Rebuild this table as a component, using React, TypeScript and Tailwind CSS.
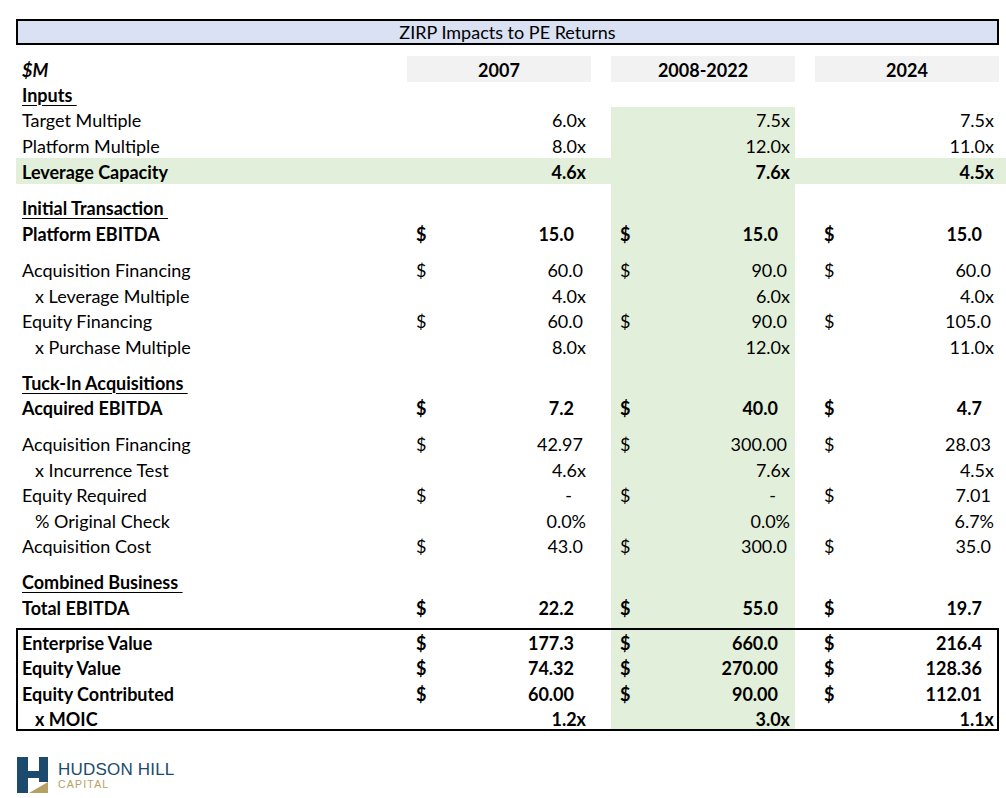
import React from "react";

type Kind = "n" | "x" | "dash";
type Cell = { v: string; d?: boolean; k?: Kind };

const GREEN = "bg-[#e2efda]";
const COLS = "grid grid-cols-[391px_184px_20px_184px_20px_184px]";

// right padding matches excel accounting formats
const pad = (k: Kind, bold: boolean) => {
  if (k === "x") return "pr-[5px]";
  if (k === "dash") return "pr-[19px]";
  return bold ? "pr-[17px]" : "pr-[8px]";
};

const Value = ({ c, bold, green }: { c?: Cell; bold: boolean; green?: boolean }) => (
  <div className={`flex items-end justify-between pb-[2.5px] ${green ? GREEN : ""}`}>
    {c && (
      <>
        <span className="pl-[9px]">{c.d ? "$" : ""}</span>
        <span className={pad(c.k ?? "n", bold)}>{c.v}</span>
      </>
    )}
  </div>
);

type RowProps = {
  label?: React.ReactNode;
  cells?: Cell[];
  bold?: boolean;
  indent?: boolean;
  h: string;
  plainB?: boolean;
  band?: boolean;
};

const Row = ({ label, cells, bold = false, indent, h, plainB, band }: RowProps) => (
  <div className={`${COLS} ${h} ${bold ? "font-bold" : ""} ${band ? GREEN : ""}`}>
    <div className={`flex items-end pb-[2.5px] ${indent ? "pl-[19px]" : "pl-[6px]"}`}>{label}</div>
    <Value c={cells?.[0]} bold={bold} />
    <div />
    <Value c={cells?.[1]} bold={bold} green={!plainB && !band} />
    <div />
    <Value c={cells?.[2]} bold={bold} />
  </div>
);

const Section = ({ children }: { children: string }) => (
  <span className="underline decoration-1 underline-offset-[3px]">{children + "\u00a0"}</span>
);

const n = (v: string, d = true): Cell => ({ v, d, k: "n" });
const x = (v: string): Cell => ({ v, k: "x" });
const dash: Cell = { v: "-", d: true, k: "dash" };

const Logo = () => (
  <div className="flex items-start gap-[10px] pl-[1px] mt-[26px]">
    <svg width="31" height="36" viewBox="0 0 31 36">
      <rect x="0" y="0" width="11" height="36" fill="#1c4a6c" />
      <rect x="22" y="0" width="9" height="25" fill="#1c4a6c" />
      <rect x="11" y="14" width="11" height="7" fill="#1c4a6c" />
      <polygon points="12,36 31,25 31,36" fill="#b8a064" />
    </svg>
    <div className="mt-[3.5px] font-['Liberation_Sans',_sans-serif]">
      <div className="text-[17px] leading-[17px] text-[#1c4a6c] tracking-[0.2px]">HUDSON HILL</div>
      <div className="text-[10.5px] leading-[12px] text-[#b8a064] tracking-[1.2px]">CAPITAL</div>
    </div>
  </div>
);

export default function App() {
  return (
    <div className="w-[1006px] h-[798px] bg-white pt-[19px] pl-[16px] text-black text-[18px] leading-[20px] font-['Lato',_sans-serif]">
      {/* title */}
      <div className="w-[983px] h-[26px] border-2 border-black bg-[#d9e1f2] flex items-center justify-center">
        ZIRP Impacts to PE Returns
      </div>

      {/* column headers */}
      <div className={`${COLS} h-[26px] mt-[11px] font-bold`}>
        <div className="flex items-end pb-[2.5px] pl-[6px] italic">$M</div>
        <div className="flex items-end justify-center pb-[2.5px] bg-[#f2f2f2]">2007</div>
        <div />
        <div className="flex items-end justify-center pb-[2.5px] bg-[#f2f2f2]">2008-2022</div>
        <div />
        <div className="flex items-end justify-center pb-[2.5px] bg-[#f2f2f2]">2024</div>
      </div>

      <Row h="h-[25px]" bold plainB label={<Section>Inputs</Section>} />
      <Row h="h-[25.5px]" label="Target Multiple" cells={[x("6.0x"), x("7.5x"), x("7.5x")]} />
      <Row h="h-[25.5px]" label="Platform Multiple" cells={[x("8.0x"), x("12.0x"), x("11.0x")]} />
      <Row h="h-[26px]" band bold label="Leverage Capacity" cells={[x("4.6x"), x("7.6x"), x("4.5x")]} />
      <Row h="h-[11px]" />

      <Row h="h-[25.5px]" bold label={<Section>Initial Transaction</Section>} />
      <Row h="h-[25.5px]" bold label="Platform EBITDA" cells={[n("15.0"), n("15.0"), n("15.0")]} />
      <Row h="h-[11px]" />
      <Row h="h-[25.5px]" label="Acquisition Financing" cells={[n("60.0"), n("90.0"), n("60.0")]} />
      <Row h="h-[25.5px]" indent label="x Leverage Multiple" cells={[x("4.0x"), x("6.0x"), x("4.0x")]} />
      <Row h="h-[25.5px]" label="Equity Financing" cells={[n("60.0"), n("90.0"), n("105.0")]} />
      <Row h="h-[25.5px]" indent label="x Purchase Multiple" cells={[x("8.0x"), x("12.0x"), x("11.0x")]} />
      <Row h="h-[10.5px]" />

      <Row h="h-[25.5px]" bold label={<Section>Tuck-In Acquisitions</Section>} />
      <Row h="h-[25.5px]" bold label="Acquired EBITDA" cells={[n("7.2"), n("40.0"), n("4.7")]} />
      <Row h="h-[10.5px]" />
      <Row h="h-[25.5px]" label="Acquisition Financing" cells={[n("42.97"), n("300.00"), n("28.03")]} />
      <Row h="h-[25.5px]" indent label="x Incurrence Test" cells={[x("4.6x"), x("7.6x"), x("4.5x")]} />
      <Row h="h-[25.5px]" label="Equity Required" cells={[dash, dash, n("7.01")]} />
      <Row h="h-[25.5px]" indent label="% Original Check" cells={[x("0.0%"), x("0.0%"), x("6.7%")]} />
      <Row h="h-[25.5px]" label="Acquisition Cost" cells={[n("43.0"), n("300.0"), n("35.0")]} />
      <Row h="h-[10.5px]" />

      <Row h="h-[25.5px]" bold label={<Section>Combined Business</Section>} />
      <Row h="h-[25.5px]" bold label="Total EBITDA" cells={[n("22.2"), n("55.0"), n("19.7")]} />
      <Row h="h-[8px]" />

      {/* returns box */}
      <div className="w-[983px] outline-2 outline-black -outline-offset-2">
        <Row h="h-[27px]" bold label="Enterprise Value" cells={[n("177.3"), n("660.0"), n("216.4")]} />
        <Row h="h-[25.5px]" bold label="Equity Value" cells={[n("74.32"), n("270.00"), n("128.36")]} />
        <Row h="h-[25.5px]" bold label="Equity Contributed" cells={[n("60.00"), n("90.00"), n("112.01")]} />
        <Row h="h-[25px]" bold indent label="x MOIC" cells={[x("1.2x"), x("3.0x"), x("1.1x")]} />
      </div>

      <Logo />
    </div>
  );
}
